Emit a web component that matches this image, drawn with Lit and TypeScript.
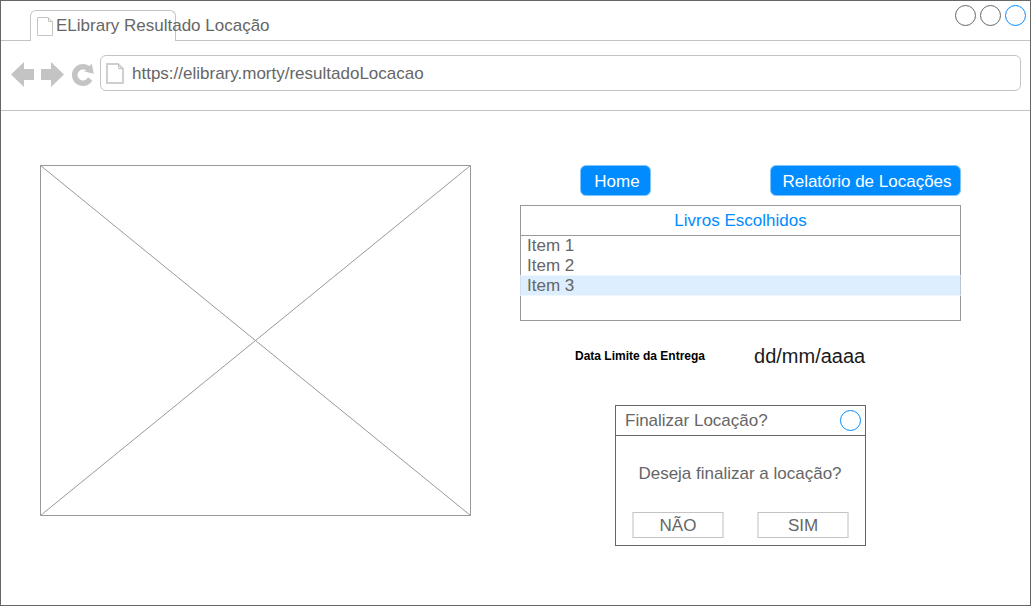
import { LitElement, html, css } from "lit";
import { customElement, property } from "lit/decorators.js";

@customElement("page-icon")
class PageIcon extends LitElement {
  @property({ type: Boolean }) bold = false;
  static styles = css`
    :host { display: block; flex: none; }
    svg { display: block; fill: none; stroke: #c4c4c4; }
  `;
  render() {
    return this.bold
      ? html`<svg width="19" height="22" viewBox="0 0 19 22">
          <path stroke-width="2" stroke="#cfcfcf" d="M1 1H12L17 6V20H1Z" />
          <path stroke-width="1" d="M12.500 1V5.500H17" />
        </svg>`
      : html`<svg width="17" height="20" viewBox="0 0 17 20">
          <path d="M.5 .5H11L15.500 5V18.500H.5Z" />
          <path d="M11.500 .5V4.500H15.500" />
        </svg>`;
  }
}

@customElement("confirm-dialog")
class ConfirmDialog extends LitElement {
  static styles = css`
    :host { display: block; box-sizing: border-box; width: 251px; height: 141px; border: 1px solid #666; }
    .head { display: flex; justify-content: space-between; align-items: center; height: 29px; padding: 0 4px 0 9px; border-bottom: 1px solid #666; }
    .close { box-sizing: border-box; width: 21px; height: 21px; border: 1px solid #008cff; border-radius: 50%; }
    .msg { text-align: center; line-height: 20px; margin-top: 28px; padding-right: 1px; }
    .actions { display: flex; justify-content: space-between; padding: 0 16px; margin-top: 28px; }
    .btn { box-sizing: border-box; width: 92px; height: 26px; line-height: 25px; text-align: center; border: 1px solid #c4c4c4; border-left: 2px solid #dfdfdf; border-right: 2px solid #dfdfdf; }
  `;
  render() {
    return html`
      <div class="head"><span>Finalizar Locação?</span><span class="close"></span></div>
      <div class="msg">Deseja finalizar a locação?</div>
      <div class="actions"><div class="btn">NÃO</div><div class="btn">SIM</div></div>
    `;
  }
}

@customElement("app-root")
class AppRoot extends LitElement {
  static styles = css`
    :host { display: block; font: 17px/20px "Liberation Sans", Arial, sans-serif; color: #666; }
    .window { box-sizing: border-box; width: 1031px; height: 606px; border: 1px solid #666; background: #fff; overflow: hidden; }
    .tabs { display: flex; height: 40px; }
    .lead { width: 29px; border-bottom: 1px solid #c4c4c4; }
    .tab { box-sizing: border-box; display: flex; width: 146px; margin-top: 9px; padding: 6px 0 0 6px; border: 1px solid #c4c4c4; border-bottom: 0; border-radius: 6px 6px 0 0; white-space: nowrap; }
    .tab span { margin: -1px 0 0 2px; }
    .rest { flex: 1; display: flex; justify-content: flex-end; gap: 4px; padding: 4px 4px 0 0; border-bottom: 1px solid #c4c4c4; }
    .dot { box-sizing: border-box; width: 21px; height: 21px; border: 1px solid #666; border-radius: 50%; }
    .dot.blue { border-color: #008cff; }
    .toolbar { box-sizing: border-box; display: flex; height: 70px; padding: 14px 9px 0 10px; border-bottom: 1px solid #c4c4c4; }
    .nav { display: block; flex: none; width: 89px; height: 36px; fill: #c4c4c4; }
    .url { box-sizing: border-box; flex: 1; display: flex; height: 36px; padding: 7px 0 0 5px; border: 1px solid #c4c4c4; border-radius: 6px; }
    .url span { margin: 1px 0 0 7px; }
    .content { display: flex; gap: 49px; padding: 54px 69px 0 39px; }
    .picture { display: block; width: 431px; height: 351px; fill: none; stroke: #999; }
    .side { width: 441px; }
    .buttons { display: flex; justify-content: space-between; padding-left: 60px; }
    .button { box-sizing: border-box; height: 31px; line-height: 31px; border: 1px solid #80c5ff; border-radius: 6px; background: #008cff; color: #fff; text-align: center; }
    .home { width: 71px; padding-left: 3px; }
    .report { width: 191px; padding-left: 3px; }
    .list { box-sizing: border-box; height: 116px; margin-top: 9px; border: 1px solid #999; }
    .title { height: 29px; line-height: 29px; text-align: center; color: #008cff; border-bottom: 1px solid #999; }
    .item { height: 20px; padding-left: 6px; line-height: 19px; }
    .item.on { box-sizing: border-box; height: 21px; margin: -1px -1px 0; border: 1px solid #eef6ff; border-left-color: #cfdfef; border-right-color: #bbc6d2; background: #ddeeff; }
    .due { display: flex; align-items: center; gap: 49px; height: 30px; margin-top: 20px; padding-left: 55px; color: #000; }
    .label { font-size: 12px; font-weight: bold; }
    .date { font-size: 20px; color: #1a1a1a; }
    confirm-dialog { margin: 34px 0 0 95px; }
  `;
  items = ["Item 1", "Item 2", "Item 3"];
  render() {
    return html`
      <div class="window">
        <div class="tabs">
          <div class="lead"></div>
          <div class="tab"><page-icon></page-icon><span>ELibrary Resultado Locação</span></div>
          <div class="rest"><i class="dot"></i><i class="dot"></i><i class="dot blue"></i></div>
        </div>
        <div class="toolbar">
          <svg class="nav" viewBox="11 55 89 36">
            <path d="M11 74.500L24 62V69H34V80H24V87Z" />
            <path d="M64 74.500L51 62V69H41V80H51V87Z" />
            <path d="M83.300 71.300L86.500 70.800A5.500 5.500 0 1 0 88 77.300L92.300 80.800A11 11 0 1 1 89.300 66L91.800 63.700L93.800 73.700Z" />
          </svg>
          <div class="url"><page-icon bold></page-icon><span>https://elibrary.morty/resultadoLocacao</span></div>
        </div>
        <div class="content">
          <svg class="picture" viewBox="0 0 431 351"><path d="M.5 .5H430.500V350.500H.5ZL430.500 350.500M430.500 .5L.5 350.500" /></svg>
          <div class="side">
            <div class="buttons"><div class="button home">Home</div><div class="button report">Relatório de Locações</div></div>
            <div class="list">
              <div class="title">Livros Escolhidos</div>
              ${this.items.map((t, i) => html`<div class="item ${i === 2 ? "on" : ""}">${t}</div>`)}
            </div>
            <div class="due"><span class="label">Data Limite da Entrega</span><span class="date">dd/mm/aaaa</span></div>
            <confirm-dialog></confirm-dialog>
          </div>
        </div>
      </div>
    `;
  }
}
